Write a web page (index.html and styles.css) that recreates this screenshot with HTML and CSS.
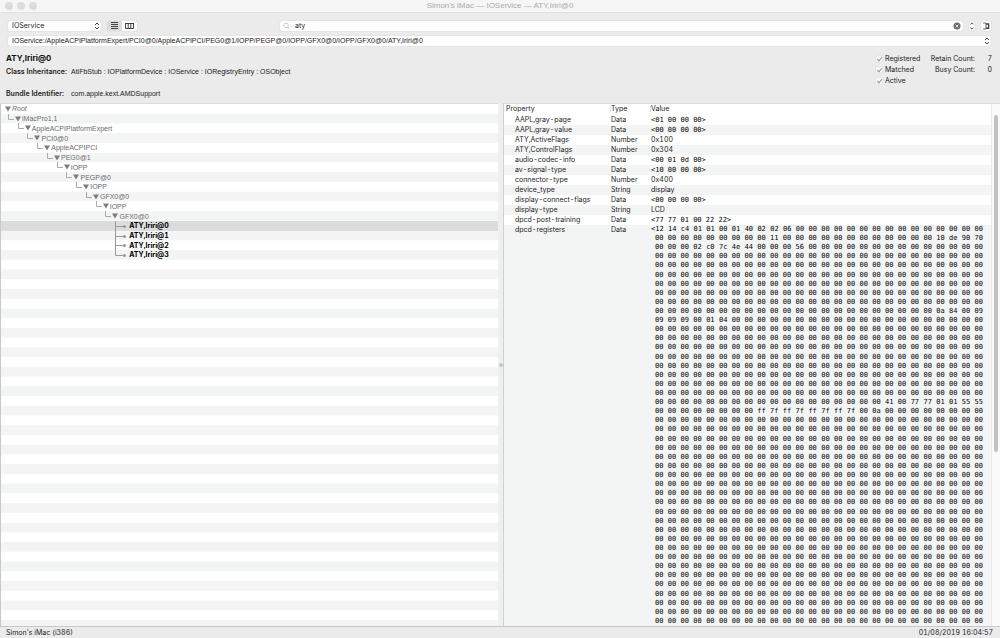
FILE: index.html
```
<!DOCTYPE html>
<html lang="en">
<head>
<meta charset="utf-8">
<title>Simon's iMac — IOService — ATY,Iriri@0</title>
<link rel="stylesheet" href="styles.css">
</head>
<body>
<div class="window">
  <header class="titlebar">
    <div class="lights"><i class="light"></i><i class="light"></i><i class="light"></i></div>
    <h1 class="title">Simon's iMac — IOService — ATY,Iriri@0</h1>
  </header>

  <div class="toolbar">
    <div class="toolbar-left">
      <div class="popup plane">
        <select class="popup-select" aria-label="Plane"><option>IOService</option></select>
        <svg class="chevrons" viewBox="0 0 6 8"><path d="M1 3L3 1L5 3M1 5L3 7L5 5"/></svg>
      </div>
      <div class="segments">
        <button class="segment segment-on" aria-label="Outline view"><svg class="seg-icon" viewBox="0 0 9 8"><path d="M1 .5H8M1 2.5H8M1 4.5H8M1 6.5H8"/></svg></button>
        <button class="segment" aria-label="Column view"><svg class="seg-icon" viewBox="0 0 9 8"><path d="M.5 1.5H8.5M.5 1V6.5H8.5V1M3.2 1V6.5M5.8 1V6.5"/></svg></button>
      </div>
    </div>
    <div class="search">
      <svg class="lens" viewBox="0 0 10 8"><circle cx="3" cy="3.4" r="2.3"/><path d="M4.7 5.1L6.6 7M7.4 3.6L8.3 4.5L9.2 3.6"/></svg>
      <input class="search-input" type="text" value="aty" aria-label="Search">
      <button class="clear" aria-label="Clear search"><svg class="clear-icon" viewBox="0 0 8 8"><circle cx="4" cy="4" r="3.5"/><path d="M2.7 2.7L5.3 5.3M5.3 2.7L2.7 5.3"/></svg></button>
    </div>
    <button class="stepper" aria-label="Previous or next match"><svg class="chevrons" viewBox="0 0 6 8"><path d="M1.4 2.4L3 .8L4.6 2.4M1.4 5.6L3 7.2L4.6 5.6"/></svg></button>
    <button class="drawer" aria-label="Toggle drawer"><svg class="drawer-icon" viewBox="0 0 8 8"><path d="M1 1H4V7H1"/><path class="heavy" d="M4 2H6.6V6.2H4"/></svg></button>
  </div>

  <div class="pathbar">
    <div class="popup path">
      <select class="popup-select path-select" aria-label="Path"><option>IOService:/AppleACPIPlatformExpert/PCI0@0/AppleACPIPCI/PEG0@1/IOPP/PEGP@0/IOPP/GFX0@0/IOPP/GFX0@0/ATY,Iriri@0</option></select>
      <svg class="chevrons" viewBox="0 0 6 8"><path d="M1 3L3 1L5 3M1 5L3 7L5 5"/></svg>
    </div>
  </div>

  <section class="info">
    <div class="info-main">
      <h2 class="name">ATY,Iriri@0</h2>
      <p class="fact"><b class="fact-label">Class Inheritance:</b><span class="fact-value">AtiFbStub : IOPlatformDevice : IOService : IORegistryEntry : OSObject</span></p>
      <p class="fact fact-last"><b class="fact-label">Bundle Identifier:</b><span class="fact-value">com.apple.kext.AMDSupport</span></p>
    </div>
    <div class="flags">
      <label class="flag"><input class="check" type="checkbox" checked disabled>Registered</label>
      <label class="flag"><input class="check" type="checkbox" checked disabled>Matched</label>
      <label class="flag"><input class="check" type="checkbox" checked disabled>Active</label>
    </div>
    <dl class="counts">
      <dt>Retain Count:</dt><dd class="count">7</dd>
      <dt>Busy Count:</dt><dd class="count">0</dd>
    </dl>
  </section>

  <main class="panes">
    <div class="tree-pane">
      <ul class="tree" id="tree"></ul>
    </div>
    <div class="splitter"><i class="grip"></i></div>
    <div class="table-pane">
      <table class="props">
        <thead class="props-head">
          <tr class="prop"><th class="head-cell">Property</th><th class="head-cell">Type</th><th class="head-cell">Value</th></tr>
        </thead>
        <tbody class="props-body">
          <tr class="prop"><td class="key">AAPL,gray-page</td><td>Data</td><td class="mono">&lt;01 00 00 00&gt;</td></tr>
          <tr class="prop"><td class="key">AAPL,gray-value</td><td>Data</td><td class="mono">&lt;00 00 00 00&gt;</td></tr>
          <tr class="prop"><td class="key">ATY,ActiveFlags</td><td>Number</td><td>0x100</td></tr>
          <tr class="prop"><td class="key">ATY,ControlFlags</td><td>Number</td><td>0x304</td></tr>
          <tr class="prop"><td class="key">audio-codec-info</td><td>Data</td><td class="mono">&lt;00 01 0d 00&gt;</td></tr>
          <tr class="prop"><td class="key">av-signal-type</td><td>Data</td><td class="mono">&lt;10 00 00 00&gt;</td></tr>
          <tr class="prop"><td class="key">connector-type</td><td>Number</td><td>0x400</td></tr>
          <tr class="prop"><td class="key">device_type</td><td>String</td><td class="strong">display</td></tr>
          <tr class="prop"><td class="key">display-connect-flags</td><td>Data</td><td class="mono">&lt;00 00 00 00&gt;</td></tr>
          <tr class="prop"><td class="key">display-type</td><td>String</td><td>LCD</td></tr>
          <tr class="prop"><td class="key">dpcd-post-training</td><td>Data</td><td class="mono">&lt;77 77 01 00 22 22&gt;</td></tr>
          <tr class="prop prop-long"><td class="key">dpcd-registers</td><td>Data</td><td class="mono dump" id="dump"></td></tr>
        </tbody>
      </table>
      <div class="scrollbar"><i class="thumb"></i></div>
    </div>
  </main>

  <footer class="status"><span>Simon's iMac (i386)</span><time>01/08/2019 16:04:57</time></footer>
</div>
<script src="main.js"></script>
</body>
</html>
```
FILE: styles.css
```
* { box-sizing: border-box; }
html, body { height: 100%; }
body {
  --compact: "Liberation Sans", Arial, sans-serif;
  margin: 0;
  overflow: hidden;
  font: 7px/10px Inter, "Open Sans", sans-serif;
  font-variant-numeric: tabular-nums;
  color: #222;
  background: #ebebeb;
}
h1, h2, p, ul, dl, dd { margin: 0; padding: 0; }
button, input, select { font: inherit; color: inherit; margin: 0; padding: 0; border: 0; background: none; appearance: none; outline: 0; }
svg { display: block; fill: none; stroke: #444; }

.window { display: flex; flex-direction: column; height: 100%; }

.titlebar { position: relative; display: flex; align-items: center; justify-content: center; height: 13px; padding-bottom: 1px; background: #f6f6f6; border-bottom: 1px solid #e0e0e0; }
.lights { position: absolute; left: 5px; top: 2px; display: flex; gap: 4px; }
.light { width: 8px; height: 8px; border-radius: 50%; background: #dcdcdc; }
.title { font: 400 8px/10px var(--compact); color: #aaa; }

.toolbar { display: flex; align-items: center; padding: 8px 9px 0 8px; }
.toolbar-left { display: flex; align-items: center; gap: 6px; width: 272px; flex: none; }
.popup { position: relative; height: 10px; background: #fff; border-radius: 2px; box-shadow: 0 0 1px #aaa; }
.plane { width: 93px; }
.popup-select { display: block; width: 100%; height: 10px; padding-left: 4px; line-height: 10px; }
.path-select { font-family: var(--compact); }
.chevrons { width: 6px; height: 8px; }
.popup .chevrons { position: absolute; right: 1px; top: 1px; pointer-events: none; }
.segments { display: flex; height: 10px; border-radius: 2px; background: #fff; box-shadow: 0 0 1px #aaa; overflow: hidden; }
.segment { display: flex; align-items: center; justify-content: center; width: 15px; }
.segment-on { background: #dcdcdc; }
.seg-icon { width: 9px; height: 8px; }
.search { display: flex; align-items: center; flex: 1; height: 10px; padding: 0 2px 0 3px; background: #fff; border-radius: 2px; box-shadow: 0 0 1px #aaa; }
.lens { width: 10px; height: 8px; stroke: #b4b4b4; stroke-width: .7; }
.search-input { flex: 1; min-width: 0; height: 10px; padding-left: 2px; }
.clear-icon { width: 8px; height: 8px; stroke: #fff; stroke-width: .8; }
.clear-icon circle { fill: #6c6c6c; stroke: none; }
.stepper { margin-left: 6px; height: 10px; background: #fff; border-radius: 3px; box-shadow: 0 0 1px #aaa; }
.drawer { display: flex; align-items: center; justify-content: center; margin-left: 6px; width: 10px; height: 10px; background: #fff; border-radius: 2px; box-shadow: 0 0 1px #aaa; }
.drawer-icon { width: 8px; height: 8px; stroke-width: .8; }
.heavy { stroke-width: 1.4; }

.pathbar { padding: 5px 9px 0 8px; }

.info { display: flex; padding: 6px 8px 0 6px; height: 57px; }
.info-main { flex: 1; }
.name { font-size: 8px; line-height: 12px; font-weight: 700; color: #111; }
.fact { display: flex; margin-top: 3px; line-height: 10px; }
.fact-last { margin-top: 12px; }
.fact-label { width: 65px; font-weight: 600; }
.fact-value { font-family: var(--compact); }
.flags { display: flex; flex-direction: column; width: 53px; padding-top: 1px; }
.flag { display: flex; align-items: center; gap: 3px; line-height: 11px; }
.check { display: flex; align-items: center; justify-content: center; width: 6px; height: 6px; background: #f6f6f6; border-radius: 1px; box-shadow: 0 0 1px #bbb; }
.check::before { content: ""; width: 2px; height: 4px; border: solid #999; border-width: 0 1px 1px 0; transform: rotate(40deg); }
.counts { display: grid; grid-template-columns: 46px 17px; grid-auto-rows: 11px; padding-top: 1px; line-height: 11px; text-align: right; white-space: nowrap; }

.panes { display: flex; flex: 1; min-height: 0; }
.tree-pane { display: flex; flex-direction: column; flex: 0 1 49.8%; overflow: hidden; border-top: 1px solid #dcdcdc; border-left: 1px solid #c8c8c8; background: #fff; }
.tree {
  flex: 1 1 0;
  min-height: 0;
  display: grid;
  grid-template-rows: repeat(54, minmax(0, 1fr));
  margin-bottom: -4px;
  list-style: none;
  background: linear-gradient(#fff 50%, #f3f5f5 50%) 0 0 / 100% calc(100% / 27);
}
.node { display: flex; align-items: center; gap: 1px; min-height: 0; padding-left: calc(7px + (var(--depth) - 1) * 100% / 51); color: #6c6c6c; font-family: var(--compact); line-height: 9px; }
.node-root { padding-left: 4px; font-style: italic; }
.node-leaf { gap: 2px; color: #000; font-weight: 700; font-family: inherit; }
.node-selected { background: #dcdcdc; }
.elbow { width: 6px; height: 10px; stroke: #aaa; overflow: visible; }
.branch { width: 12px; height: 10px; stroke: #999; overflow: visible; }
.branch circle { fill: #999; stroke: none; }
.twist { width: 6px; height: 6px; fill: #7c7c7c; stroke: none; }

.splitter { display: flex; align-items: center; justify-content: center; width: 6px; background: #efefef; border-right: 1px solid #d0d0d0; }
.grip { width: 4px; height: 4px; border-radius: 50%; background: #c4c4c4; }

.table-pane { display: flex; flex: 1; min-width: 0; border-top: 1px solid #dcdcdc; background: #fff; }
.props { display: flex; flex-direction: column; flex: 1; min-width: 0; }
.props-head, .props-body { display: flex; flex-direction: column; }
.props-head { padding-bottom: 1px; }
.props-body { flex: 1; }
.prop { display: grid; grid-template-columns: 105px 40px 1fr; padding: 0 8px 0 2px; }
.props-body .prop:nth-child(even) { background: #f3f5f5; }
.head-cell { padding: 0; text-align: left; font-weight: 400; }
.head-cell + .head-cell { box-shadow: -3px 0 0 -2px #ddd; }
td { padding: 0; }
.key { padding-left: 9px; }
.strong { color: #111; }
.mono { font-family: "DejaVu Sans Mono", monospace; color: #000; white-space: pre; }
.prop-long { flex: 1; }
.dump { display: grid; grid-auto-rows: minmax(0, 1fr); line-height: 9px; }
.line { padding-left: 4px; white-space: normal; text-align-last: justify; }
.line-first { padding-left: 0; }
.scrollbar { width: 9px; padding: 11px 2px 0; background: #fafafa; border-left: 1px solid #e8e8e8; }
.thumb { display: block; height: 66%; border-radius: 3px; background: #c1c1c1; }

.status { display: flex; justify-content: space-between; padding: 1px 7px 0 6px; height: 12px; border-top: 1px solid #c8c8c8; }
```
FILE: main.js
```
const tree = document.getElementById("tree");
const parents = ["Root", "iMacPro1,1", "AppleACPIPlatformExpert", "PCI0@0", "AppleACPIPCI", "PEG0@1", "IOPP", "PEGP@0", "IOPP", "GFX0@0", "IOPP", "GFX0@0"];
const leaves = ["ATY,Iriri@0", "ATY,Iriri@1", "ATY,Iriri@2", "ATY,Iriri@3"];
const twist = '<svg class="twist" viewBox="0 0 6 6"><path d="M0 .5H6L3 5.5Z"/></svg>';
const elbow = '<svg class="elbow" viewBox="0 0 6 10"><path d="M.5 0V5.5H6"/></svg>';

parents.forEach((name, depth) => {
  const root = depth === 0;
  tree.insertAdjacentHTML("beforeend",
    `<li class="node${root ? " node-root" : ""}" style="--depth:${depth}">${root ? "" : elbow}${twist}<span>${name}</span></li>`);
});
leaves.forEach((name, i) => {
  const end = i === leaves.length - 1 ? "V5.5" : "V10M.5 5.5";
  tree.insertAdjacentHTML("beforeend",
    `<li class="node node-leaf${i === 0 ? " node-selected" : ""}" style="--depth:12"><svg class="branch" viewBox="0 0 12 10"><path d="M.5 0${end}H9"/><circle cx="9.5" cy="5.5" r="1.5"/></svg><span>${name}</span></li>`);
});

// Register dump: 44 visible lines of 26 bytes; only non-zero runs are listed, as [line, column, bytes].
const lines = Array.from({ length: 44 }, () => Array(26).fill("00"));
const runs = [
  [0, 0, "12 14 c4 01 01 00 01 40 02 02 06"],
  [1, 9, "11"], [1, 22, "10 de 90 70"],
  [2, 3, "02 c0 7c 4e 44 00 00 00 56"],
  [9, 22, "0a 84 00 09"],
  [10, 0, "09 09 09 00 01 04"],
  [19, 18, "41 00 77 77 01 01 55 55"],
  [20, 8, "ff 7f ff 7f ff 7f ff 7f 00 0a"]
];
for (const [line, column, bytes] of runs) {
  bytes.split(" ").forEach((b, i) => { lines[line][column + i] = b; });
}
document.getElementById("dump").innerHTML = lines
  .map((l, i) => `<div class="line${i ? "" : " line-first"}">${i ? "" : "&lt;"}${l.join(" ")}</div>`)
  .join("");
```
